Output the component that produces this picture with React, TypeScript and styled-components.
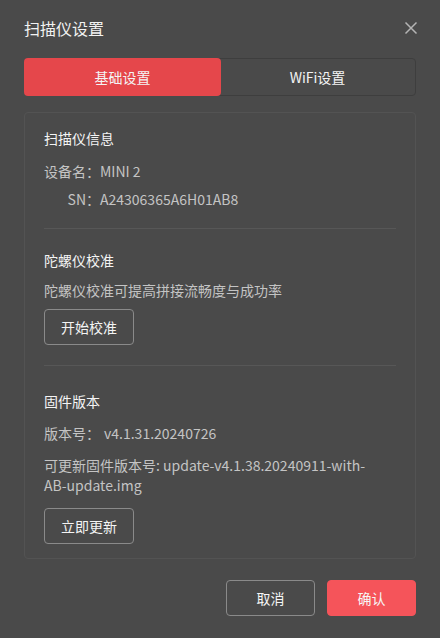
import React, { useState } from "react";
import styled, { createGlobalStyle } from "styled-components";

const Global = createGlobalStyle`
  html, body { margin: 0; padding: 0; background: #4a4a4a; }
  body {
    font-family: "Noto Sans CJK SC", "Noto Sans", sans-serif;
    -webkit-font-smoothing: antialiased;
  }
  * { box-sizing: border-box; }
`;

const Dialog = styled.div`
  width: 440px;
  height: 638px;
  background: #4a4a4a;
  display: flex;
  flex-direction: column;
  padding: 16px 24px 0 24px;
`;

const Header = styled.div`
  display: flex;
  align-items: center;
  justify-content: space-between;
  height: 24px;
`;

const Title = styled.div`
  font-size: 16px;
  line-height: 24px;
  color: #f2f2f2;
`;

const CloseButton = styled.button`
  width: 20px;
  height: 20px;
  padding: 0;
  margin-right: -5px;
  border: none;
  background: transparent;
  display: flex;
  align-items: center;
  justify-content: center;
  cursor: pointer;
`;

const Tabs = styled.div`
  margin-top: 18px;
  height: 38px;
  display: grid;
  grid-template-columns: 1fr 1fr;
  border: 1px solid #3e3e3e;
  border-radius: 4px;
`;

const Tab = styled.button<{ $active?: boolean }>`
  margin: -1px;
  border: none;
  border-radius: 4px;
  background: ${(p) => (p.$active ? "#e5474b" : "transparent")};
  color: #f4f4f4;
  font-family: inherit;
  font-size: 14px;
  cursor: pointer;
`;

const Card = styled.div`
  margin-top: 16px;
  border: 1px solid #535353;
  border-radius: 4px;
  padding: 0 19px;
`;

const Section = styled.div<{ $top: number; $bottom: number; $last?: boolean }>`
  padding-top: ${(p) => p.$top}px;
  padding-bottom: ${(p) => p.$bottom}px;
  border-bottom: ${(p) => (p.$last ? "none" : "1px solid #575757")};
  display: flex;
  flex-direction: column;
  align-items: flex-start;
`;

const Heading = styled.div`
  font-size: 14px;
  line-height: 20px;
  color: #f4f4f4;
`;

const Text = styled.div<{ $mt: number }>`
  margin-top: ${(p) => p.$mt}px;
  max-width: 334px;
  font-size: 14px;
  line-height: 20px;
  color: #c4c4c4;
`;

const InfoGrid = styled.div`
  margin-top: 13px;
  display: grid;
  grid-template-columns: auto auto;
  row-gap: 8px;
  column-gap: 0;
  font-size: 14px;
  line-height: 20px;
  color: #c4c4c4;
`;

const Label = styled.span`
  text-align: right;
`;

const Value = styled.span``;

const Gap = styled.span`
  display: inline-block;
  width: 4px;
`;

const OutlineButton = styled.button<{ $mt: number }>`
  margin-top: ${(p) => p.$mt}px;
  width: 90px;
  height: 36px;
  border: 1px solid #8a8a8a;
  border-radius: 4px;
  background: transparent;
  color: #f4f4f4;
  font-family: inherit;
  font-size: 14px;
  cursor: pointer;
`;

const Footer = styled.div`
  margin-top: 21px;
  display: flex;
  justify-content: flex-end;
  gap: 12px;
`;

const FooterButton = styled.button<{ $primary?: boolean }>`
  width: 89px;
  height: 36px;
  border-radius: 4px;
  border: 1px solid ${(p) => (p.$primary ? "#f5545a" : "#8a8a8a")};
  background: ${(p) => (p.$primary ? "#f5545a" : "transparent")};
  color: #f6f6f6;
  font-family: inherit;
  font-size: 14px;
  cursor: pointer;
`;

export default function App() {
  const [tab, setTab] = useState(0);
  return (
    <>
      <Global />
      <Dialog>
        <Header>
          <Title>扫描仪设置</Title>
          <CloseButton aria-label="close">
            <svg width="14" height="14" viewBox="0 0 14 14">
              <path d="M1.5 1.5 L12.5 12.5 M12.5 1.5 L1.5 12.5" stroke="#b4b4b4" strokeWidth="1.5" fill="none" />
            </svg>
          </CloseButton>
        </Header>
        <Tabs>
          <Tab $active={tab === 0} onClick={() => setTab(0)}>基础设置</Tab>
          <Tab $active={tab === 1} onClick={() => setTab(1)}>WiFi设置</Tab>
        </Tabs>
        <Card>
          <Section $top={15} $bottom={19}>
            <Heading>扫描仪信息</Heading>
            <InfoGrid>
              <Label>设备名：</Label>
              <Value>MINI 2</Value>
              <Label>SN：</Label>
              <Value>A24306365A6H01AB8</Value>
            </InfoGrid>
          </Section>
          <Section $top={21} $bottom={20}>
            <Heading>陀螺仪校准</Heading>
            <Text $mt={10}>陀螺仪校准可提高拼接流畅度与成功率</Text>
            <OutlineButton $mt={9}>开始校准</OutlineButton>
          </Section>
          <Section $top={25} $bottom={14} $last>
            <Heading>固件版本</Heading>
            <Text $mt={12}>
              版本号：<Gap />v4.1.31.20240726
            </Text>
            <Text $mt={12}>可更新固件版本号: update-v4.1.38.20240911-with-AB-update.img</Text>
            <OutlineButton $mt={13}>立即更新</OutlineButton>
          </Section>
        </Card>
        <Footer>
          <FooterButton>取消</FooterButton>
          <FooterButton $primary>确认</FooterButton>
        </Footer>
      </Dialog>
    </>
  );
}
